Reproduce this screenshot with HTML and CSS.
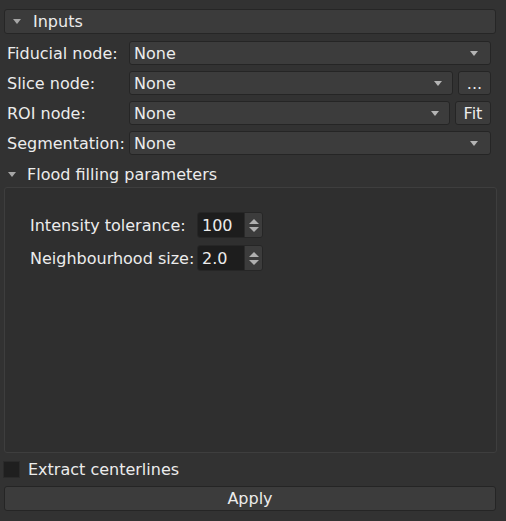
FILE: index.html
```html
<!DOCTYPE html>
<html>
<head>
<meta charset="utf-8">
<link rel="stylesheet" href="styles.css">
</head>
<body>
<div class="panel">
  <div class="section-btn"><span class="tri"></span><span>Inputs</span></div>
  <div class="form">
    <label class="lbl">Fiducial node:</label>
    <div class="rowc"><div class="combo full"><span>None</span><span class="tri"></span></div></div>
    <label class="lbl">Slice node:</label>
    <div class="rowc"><div class="combo r1"><span>None</span><span class="tri"></span></div><div class="btn dots">...</div></div>
    <label class="lbl">ROI node:</label>
    <div class="rowc"><div class="combo r2"><span>None</span><span class="tri"></span></div><div class="btn fit">Fit</div></div>
    <label class="lbl">Segmentation:</label>
    <div class="rowc"><div class="combo full"><span>None</span><span class="tri"></span></div></div>
  </div>
  <div class="sub-head"><span class="tri"></span><span>Flood filling parameters</span></div>
  <div class="group">
    <div class="pform">
      <label class="plbl">Intensity tolerance:</label>
      <div class="spin"><span class="val">100</span><span class="arrows"><span class="up"></span><span class="down"></span></span></div>
      <label class="plbl">Neighbourhood size:</label>
      <div class="spin"><span class="val">2.0</span><span class="arrows"><span class="up"></span><span class="down"></span></span></div>
    </div>
  </div>
  <div class="check-row"><span class="box"></span><span>Extract centerlines</span></div>
  <div class="apply">Apply</div>
</div>
</body>
</html>
```
FILE: styles.css
```css
html, body {
  margin: 0;
  padding: 0;
  background: #323232;
}
body {
  width: 506px;
  height: 521px;
  overflow: hidden;
  font-family: "DejaVu Sans", sans-serif;
  font-size: 16px;
  line-height: 19px;
  color: #ececec;
}
.panel {
  display: flex;
  flex-direction: column;
  padding: 9px 10px 0 4px;
}
.tri {
  display: inline-block;
  width: 0;
  height: 0;
  border-left: 4px solid transparent;
  border-right: 4px solid transparent;
  border-top: 5px solid #a6a6a6;
}
.section-btn {
  height: 23px;
  border: 1px solid #262626;
  border-radius: 3px;
  background: #3b3b3b;
  display: flex;
  align-items: center;
  gap: 12px;
  padding-left: 8px;
}
.form {
  display: grid;
  grid-template-columns: 125px 1fr;
  row-gap: 6px;
  margin-top: 7px;
  align-items: center;
}
.lbl {
  padding-left: 3px;
  white-space: nowrap;
}
.rowc {
  display: flex;
  gap: 5px;
  padding-right: 5px;
}
.combo {
  height: 22px;
  border: 1px solid #252525;
  border-radius: 3px;
  background: #3c3c3c;
  display: flex;
  align-items: center;
  justify-content: space-between;
  padding: 0 12px 0 4px;
  flex: 1;
}
.combo .tri { border-top-color: #b4b4b4; }
.r1 { flex: none; width: 308px; padding-right: 10px; }
.r2 { flex: none; width: 305px; padding-right: 10px; }
.btn {
  height: 22px;
  border: 1px solid #252525;
  border-radius: 3px;
  background: #3c3c3c;
  display: flex;
  align-items: center;
  justify-content: center;
  flex: 1;
}
.sub-head {
  display: flex;
  align-items: center;
  gap: 11px;
  padding-left: 4px;
  height: 22px;
  margin-top: 8px;
}
.group {
  height: 264px;
  margin-top: 2px;
  margin-right: -1px;
  border: 1px solid #3e3e3e;
  border-radius: 3px;
  background: #2f2f2f;
}
.pform {
  display: grid;
  grid-template-columns: 167px 66px;
  row-gap: 7px;
  padding: 24px 0 0 25px;
  align-items: center;
}
.plbl { white-space: nowrap; }
.spin {
  height: 24px;
  display: flex;
  border-radius: 3px;
  overflow: hidden;
  border: 1px solid #262626;
}
.spin .val {
  flex: 1;
  background: #1d1d1d;
  padding-left: 4px;
  display: flex;
  align-items: center;
}
.spin .arrows {
  width: 17px;
  background: #3c3c3c;
  display: flex;
  flex-direction: column;
  align-items: center;
  justify-content: center;
  gap: 3px;
  border-left: 1px solid #2a2a2a;
}
.up {
  width: 0; height: 0;
  border-left: 5px solid transparent;
  border-right: 5px solid transparent;
  border-bottom: 5px solid #b0b0b0;
}
.down {
  width: 0; height: 0;
  border-left: 5px solid transparent;
  border-right: 5px solid transparent;
  border-top: 5px solid #b0b0b0;
}
.check-row {
  display: flex;
  align-items: center;
  gap: 8px;
  margin-top: 7px;
  margin-left: -1px;
  height: 18px;
}
.box {
  width: 15px;
  height: 15px;
  background: #1f1f1f;
  border: 1px solid #2a2a2a;
}
.apply {
  height: 23px;
  margin-top: 8px;
  border: 1px solid #252525;
  border-radius: 3px;
  background: #3c3c3c;
  display: flex;
  align-items: center;
  justify-content: center;
}
```
